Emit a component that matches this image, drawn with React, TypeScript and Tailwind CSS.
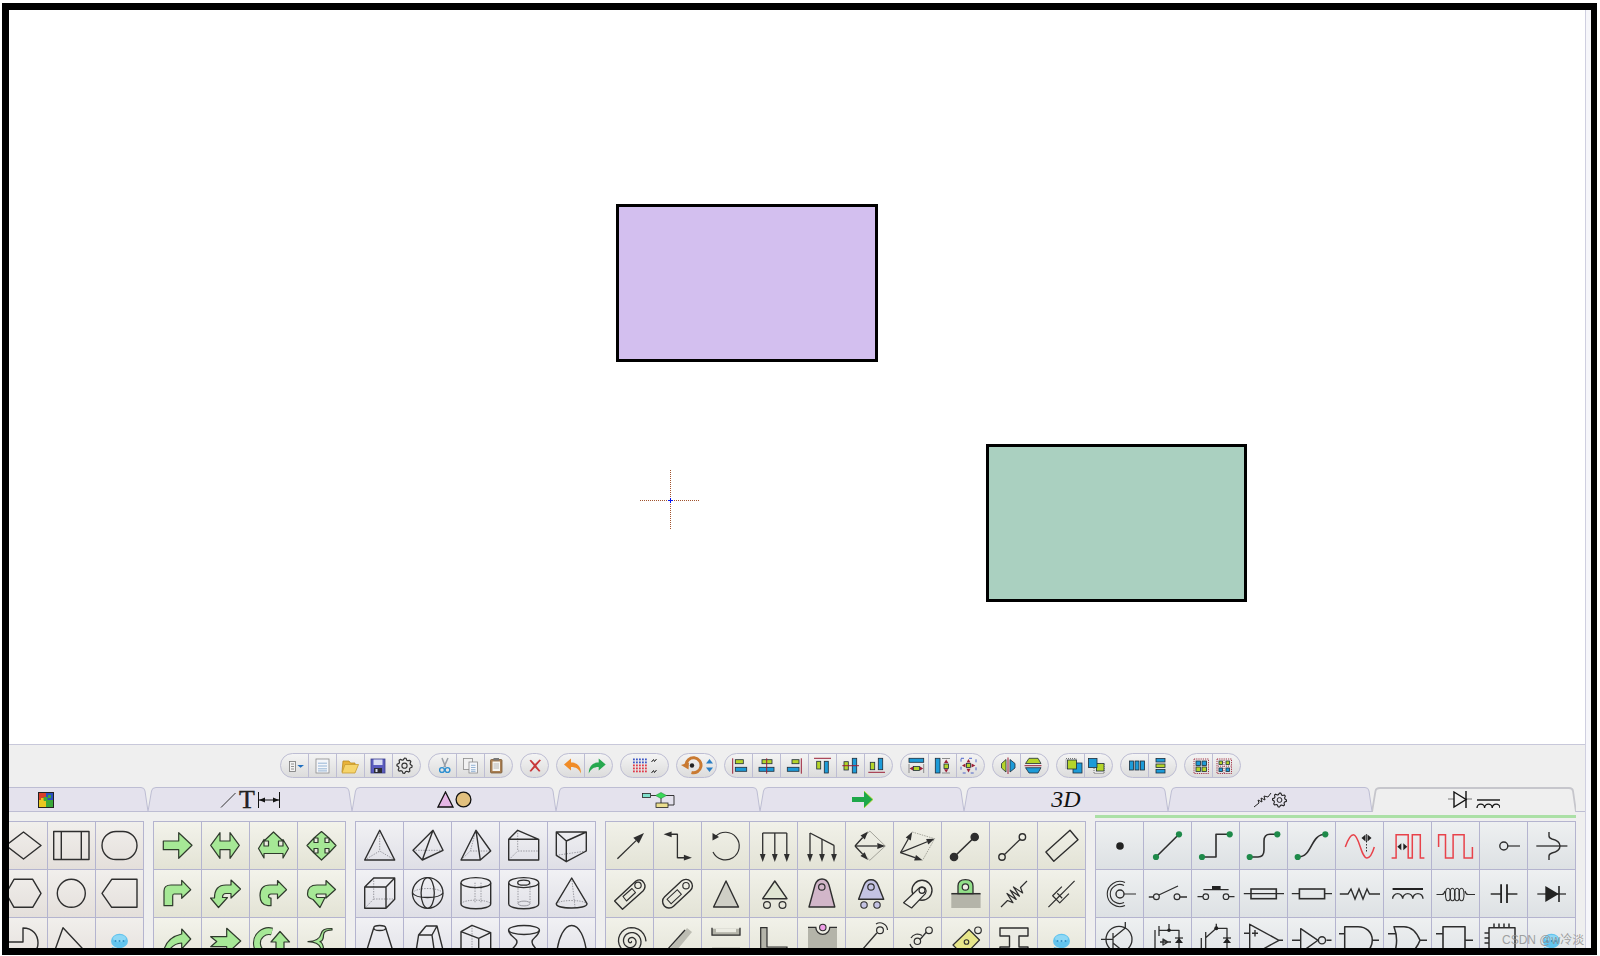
import React, { type ReactNode } from 'react'

const INK = '#2e2e2e'
const ARROW = '#a6e896'

type PathProps = { d: string; f?: string; c?: string; w?: number }

function P({ d, f = 'none', c = INK, w = 1.4 }: PathProps) {
  return <path d={d} fill={f} stroke={c} strokeWidth={w} strokeLinejoin="round" />
}

// hidden edges on the 3d solids
function H({ d }: { d: string }) {
  return <path d={d} fill="none" stroke="#8f8f96" strokeWidth={0.9} strokeDasharray="1.4 1.2" />
}

function C({ x, y, r, f = 'none', c = INK, w = 1.4 }: { x: number; y: number; r: number; f?: string; c?: string; w?: number }) {
  return <circle cx={x} cy={y} r={r} fill={f} stroke={c} strokeWidth={w} />
}

function E({ x, y, rx, ry, f = 'none', c = INK, w = 1.3 }: { x: number; y: number; rx: number; ry: number; f?: string; c?: string; w?: number }) {
  return <ellipse cx={x} cy={y} rx={rx} ry={ry} fill={f} stroke={c} strokeWidth={w} />
}

function R({ x, y, w, h, f }: { x: number; y: number; w: number; h: number; f: string }) {
  return <rect x={x} y={y} width={w} height={h} fill={f} stroke="#1f2d3a" strokeWidth={0.8} />
}

function Arw({ x1, y1, x2, y2, size = 8 }: { x1: number; y1: number; x2: number; y2: number; size?: number }) {
  const a = Math.atan2(y2 - y1, x2 - x1)
  const bx = x2 - Math.cos(a) * size
  const by = y2 - Math.sin(a) * size
  const nx = -Math.sin(a) * size * 0.36
  const ny = Math.cos(a) * size * 0.36
  return (
    <g>
      <line x1={x1} y1={y1} x2={bx} y2={by} stroke={INK} strokeWidth={1.3} />
      <polygon points={`${x2},${y2} ${bx + nx},${by + ny} ${bx - nx},${by - ny}`} fill={INK} />
    </g>
  )
}

function gearPath(cx: number, cy: number, r1: number, r2: number, n: number) {
  const pts: string[] = []
  for (let i = 0; i < n * 4; i++) {
    const a = (i / (n * 4)) * Math.PI * 2
    const r = i % 4 < 2 ? r2 : r1
    pts.push(`${(cx + Math.cos(a) * r).toFixed(2)} ${(cy + Math.sin(a) * r).toFixed(2)}`)
  }
  return `M${pts.join('L')}Z`
}

function spiralPath(cx: number, cy: number, turns: number, rMax: number) {
  const pts: string[] = []
  const n = turns * 24
  for (let i = 0; i <= n; i++) {
    const a = (i / 24) * Math.PI * 2
    const r = (i / n) * rMax
    pts.push(`${(cx + Math.cos(a) * r).toFixed(2)} ${(cy + Math.sin(a) * r).toFixed(2)}`)
  }
  return `M${pts.join('L')}`
}

// diagonal spring, runs lower left to upper right
function springPath() {
  const pts: string[] = ['M11 37', 'L17.5 30.5']
  for (let i = 1; i <= 7; i++) {
    const t = i / 8
    const x = 17.5 + t * 13
    const y = 30.5 - t * 13
    const s = i % 2 ? 3.8 : -3.8
    pts.push(`L${x + s} ${y + s}`)
  }
  pts.push('L30.5 17.5', 'L37 11')
  return pts.join(' ')
}

const Bubble = (
  <g>
    <path d="M16 29 L15 33 L20 30 Z" fill="#5ec1ec" />
    <ellipse cx={23.5} cy={23} rx={8.5} ry={7.2} fill="#62c4ee" />
    <ellipse cx={23.5} cy={20.5} rx={6.5} ry={3.5} fill="#8ed8f5" />
    <circle cx={19.5} cy={23} r={1} fill="#2f8fc4" />
    <circle cx={23.5} cy={23} r={1} fill="#2f8fc4" />
    <circle cx={27.5} cy={23} r={1} fill="#2f8fc4" />
  </g>
)

const basicShapes: ReactNode[] = [
  <P d="M23.5 10 L41 23.5 L23.5 37 L6 23.5 Z" />,
  <P d="M5.7 9.5 H41 V37.5 H5.7 Z M13.3 9.5 V37.5 M33.3 9.5 V37.5" />,
  <rect x={6} y={9.5} width={35} height={28} rx={14} fill="none" stroke={INK} strokeWidth={1.4} />,
  <P d="M14 9.3 H32.7 L41 23.3 L32.7 37.3 H14 L6 23.3 Z" />,
  <C x={23.3} y={23.3} r={14} />,
  <P d="M6 23.3 L15.7 9.3 H41 V37.3 H15.7 Z" />,
  <P d="M23 10 C33 10 38 17 38 25 C38 32 33 38 23 38 H6 V24 H23 Z" />,
  <P d="M15 9.7 L41 37.5 H5 Z" />,
  Bubble,
]

function Green({ d }: { d: string }) {
  return <P d={d} f={ARROW} c="#2f3a2c" w={1.2} />
}

const arrowShapes: ReactNode[] = [
  <Green d="M9.3 19 H24.7 V10.7 L38 23.3 L24.7 36.3 V27.7 H9.3 Z" />,
  <Green d="M8.7 23.3 L18 10.7 V19 H28 V10.7 L37.3 23.3 L28 36.3 V27.7 H18 V36.3 Z" />,
  <Green d="M23.5 10 L33 19 L28.5 19 L28.5 24 L33 24 L33 17.5 L38.5 26.5 L33 36 L33 31.5 L14 31.5 L14 36 L8.5 26.5 L14 17.5 L14 24 L18.5 24 L18.5 19 L14 19 Z" />,
  <Green d="M23.5 9.5 L31 16 H27 V20.5 H31 V16 L38 23.5 L31 31 H31 V26.5 H27 V31 H31 L23.5 38 L16 31 H20 V26.5 H16 V31 L9 23.5 L16 16 V20.5 H20 V16 H16 Z" />,
  <Green d="M10 35.7 V21 Q10 15 17 15 H27.7 V10.3 L36.7 19.7 L27.7 28.3 V24 H20 Q18.7 24 18.7 26 V35.7 Z" />,
  <Green d="M29 15 V10 L38.5 19 L29 28 V23.5 H24 Q20.5 23.5 20.5 27.5 H25.5 L16.5 37.5 L8.5 28 H12.5 Q12.5 15 24 15 Z" />,
  <Green d="M27.5 15 V10.5 L36.5 19.7 L27.5 28.5 V24 H21 Q18.5 24 18.5 26.5 Q18.5 28 21 28 V35.7 H18 Q10 35 10 25.5 Q10 15 20 15 Z" />,
  <Green d="M28 15 V10.5 L37.5 19.5 L28 28 V24 H19.5 Q17 24 19 27.5 H27 L22 37.5 L15 29.5 Q9.5 28 9.5 24 Q9.5 15 19 15 Z" />,
  <Green d="M9 38 Q10 20 27.7 16 V11 L36.7 21 L27.7 31 V25 Q16 26 13 38 Z" />,
  <Green d="M8.7 18.7 H24.7 V10.3 L38.7 23 L24.7 36 V28.7 H8.7 L14.7 23.5 Z" />,
  <g>
    <path d="M22 13.5 A12 12 0 1 0 24 36" fill="none" stroke="#2f3a2c" strokeWidth={8} />
    <path d="M22 13.5 A12 12 0 1 0 24 36" fill="none" stroke={ARROW} strokeWidth={5.8} />
    <Green d="M30 13.5 L39.5 24 H34 V32 H26 V24 H21 Z" />
  </g>,
  <Green d="M34 10.5 C26 10.5 24 12 23 16 C22 21 18 23 10 23.7 C18 24 22 27 23 31 C24 36 26 37 34 37 L34 35.5 C28 35 26 34 25.5 30 C25 27 24.5 24.5 22 23.7 C25 23 25.5 20 25.5 17 C26 13 28 12.5 34 12 Z" />,
]

const solidShapes: ReactNode[] = [
  <g>
    <H d="M8.7 38 L23.7 29 L38.7 38 M23.7 8.3 V29" />
    <P d="M23.7 8.3 L38.7 38 H8.7 Z" />
  </g>,
  <g>
    <H d="M9 28.3 H39" />
    <P d="M29 8.3 L9 28.3 L18.3 38 L39 28.3 Z M29 8.3 L18.3 38" />
  </g>,
  <g>
    <H d="M9 38 L18.3 29 H38.7 M24 8.3 L18.3 29" />
    <P d="M24 8.3 L9 38 H28.3 L38.7 29 Z M24 8.3 L28.3 38" />
  </g>,
  <g>
    <H d="M17.7 8.3 V29 M8.7 38 L17.7 29 H38.7" />
    <P d="M8.7 17.3 L17.7 8.3 L38.7 17.3 V38 H8.7 Z M8.7 17.3 H38.7" />
  </g>,
  <g>
    <H d="M8.3 33.3 L38.3 29" />
    <P d="M8.3 10 H38.3 V29 L18.3 39.7 L8.3 33.3 Z M8.3 10 L18.3 19 L38.3 10 M18.3 19 V39.7" />
  </g>,
  <g>
    <H d="M17.7 8 V29 H38.7 M17.7 29 L8.7 38.3" />
    <P d="M8.7 17 H30 V38.3 H8.7 Z M8.7 17 L17.7 8 H38.7 V29.3 L30 38.3 M30 17 L38.7 8" />
  </g>,
  <g>
    <H d="M8.4 23 C12 17 35 17 39 23" />
    <E x={23.7} y={23} rx={15.3} ry={15.3} />
    <E x={23.7} y={23} rx={6.6} ry={15.3} />
    <path d="M8.4 23 C12 29 35 29 39 23" fill="none" stroke={INK} strokeWidth={1.3} />
  </g>,
  <g>
    <H d="M23 12.7 V33 M29 12.7 V33 M9 33.7 C12 29 35 29 38.7 33.7" />
    <P d="M9 12.7 V33.7 C9 40.5 38.7 40.5 38.7 33.7 V12.7" />
    <E x={23.85} y={12.7} rx={14.85} ry={5} />
  </g>,
  <g>
    <H d="M18 13 V33 M30 13 V33" />
    <E x={24} y={33.5} rx={6} ry={2.4} c="#8f8f96" w={0.9} />
    <P d="M8.7 12.7 V33.7 C8.7 40.5 38.7 40.5 38.7 33.7 V12.7" />
    <E x={23.7} y={12.7} rx={15} ry={5} />
    <E x={23.7} y={12.7} rx={6} ry={2.5} />
  </g>,
  <g>
    <H d="M8.3 33.7 C12 29.5 35 29.5 39 33.7 M23.7 8 L27 37" />
    <P d="M23.7 8 L8.3 33.7 C8.3 39.5 39 39.5 39 33.7 Z" />
  </g>,
  <g>
    <P d="M17.7 10 L9 38 M29.7 10 L38.5 38" />
    <E x={23.7} y={10} rx={6} ry={2.5} />
  </g>,
  <P d="M22 8 H33 L39 32 V40 M22 8 L14.6 17 H28 L33 8 M14.6 17 L11.3 38 M28 17 L31 38" />,
  <g>
    <H d="M20 7.3 V32 M9 32 H26" />
    <P d="M20 7.3 L38.7 14.7 L26.7 20.3 L9 13.7 Z M9 13.7 V40 M26.7 20.3 V40 M38.7 14.7 V38" />
  </g>,
  <g>
    <E x={24} y={12} rx={15.5} ry={4.5} />
    <P d="M8.5 12 C10 20 17 19 17 24 C17 29 10 30 8.5 38 M39.5 12 C38 20 32 19 32 24 C32 29 38 30 39.5 38" />
  </g>,
  <P d="M8.5 38 C10 18 17 7.5 23.7 7.5 C31 7.5 37 18 39 38" />,
]

const BLOCK = '#b4b4a9'

const mechShapes: ReactNode[] = [
  <Arw x1={11.4} y1={36.7} x2={38} y2={11} size={11} />,
  <g>
    <path d="M17 12.3 H23.4 V35.7 H30" fill="none" stroke={INK} strokeWidth={1.3} />
    <Arw x1={23.4} y1={12.3} x2={9.6} y2={12.3} />
    <Arw x1={23.4} y1={35.7} x2={37.9} y2={35.7} />
  </g>,
  <g>
    <path d="M13.5 14.5 A13.8 13.8 0 1 1 11 30" fill="none" stroke={INK} strokeWidth={1.2} />
    <polygon points="10.5,18.5 10.5,11 17,15" fill={INK} />
  </g>,
  <g>
    <path d="M12.7 11 H36.8" fill="none" stroke={INK} strokeWidth={1.3} />
    <Arw x1={12.7} y1={11} x2={12.7} y2={40} />
    <Arw x1={24.8} y1={11} x2={24.8} y2={40} />
    <Arw x1={36.8} y1={11} x2={36.8} y2={40} />
  </g>,
  <g>
    <path d="M12 11 L36 23.3" fill="none" stroke={INK} strokeWidth={1.3} />
    <Arw x1={12} y1={11} x2={12} y2={40} />
    <Arw x1={24} y1={17} x2={24} y2={40} />
    <Arw x1={36} y1={23.3} x2={36} y2={40} />
  </g>,
  <g>
    <path d="M23.8 9 L39.3 24 L23.8 38.3 L9 24 Z" fill="none" stroke="#9b9b92" strokeWidth={0.9} />
    <Arw x1={9} y1={24} x2={22} y2={9.5} />
    <Arw x1={9} y1={24} x2={39.3} y2={24} />
    <Arw x1={9} y1={24} x2={22} y2={38} />
  </g>,
  <g>
    <path d="M18.2 10 L40.6 16.7 L28.6 38.3" fill="none" stroke="#9b9b92" strokeWidth={0.9} strokeDasharray="1.5 1" />
    <Arw x1={6.5} y1={30.7} x2={18.2} y2={10} />
    <Arw x1={6.5} y1={30.7} x2={40.6} y2={16.7} />
    <Arw x1={6.5} y1={30.7} x2={28.6} y2={38.3} />
  </g>,
  <g>
    <path d="M12 35 L32.7 15" stroke={INK} strokeWidth={1.6} fill="none" />
    <C x={12} y={35} r={3.6} f={INK} />
    <C x={32.7} y={15} r={3.6} f={INK} />
  </g>,
  <g>
    <path d="M14 33 L30.5 17" stroke={INK} strokeWidth={1.3} fill="none" />
    <C x={12} y={35} r={3.2} />
    <C x={32.4} y={15} r={3.2} />
  </g>,
  <P d="M7.9 30 L32 8.3 L40 17.7 L15.8 39.3 Z" />,
  <g>
    <P d="M8.6 31 L30 11 Q35 8 38 13 Q40.5 17 37 21 L16.5 39.3 Z" />
    <P d="M17 26.5 L26 18.5 L29.5 22.5 L20.5 31 Z" w={1.1} />
    <C x={32} y={15.3} r={3.2} w={1.2} />
  </g>,
  <g>
    <rect x={5.5} y={17.2} width={36} height={13} rx={6.5} transform="rotate(-43 23.5 23.7)" fill="none" stroke={INK} strokeWidth={1.4} />
    <rect x={12} y={20.7} width={14} height={6} transform="rotate(-43 23.5 23.7)" fill="none" stroke={INK} strokeWidth={1} />
    <C x={32} y={15.7} r={3.2} w={1.2} />
  </g>,
  <P d="M24 11 L36.5 37 H11.6 Z" f="#cfcfc6" />,
  <g>
    <P d="M24.8 11 L37 28.7 H12.7 Z" f="#e0e5d3" />
    <C x={17} y={35} r={3.4} w={1.2} />
    <C x={32.5} y={35} r={3.4} w={1.2} />
  </g>,
  <g>
    <P d="M11 37 L17 15 Q19 9 24 9 Q29 9 31 15 L36.8 37 Z" f="#d2b6c9" />
    <C x={23.8} y={17} r={3.2} w={1.2} />
  </g>,
  <g>
    <P d="M12.6 29.3 L18 15 Q20 9.7 25 9.7 Q30 9.7 32 15 L37.7 29.3 Z" f="#c4c3e3" />
    <C x={25} y={17} r={3.2} w={1.2} />
    <C x={18} y={35} r={3.2} f="#c4c3e3" w={1.1} />
    <C x={31} y={35} r={3.2} f="#c4c3e3" w={1.1} />
  </g>,
  <g>
    <C x={28} y={20.3} r={10} />
    <P d="M9.6 32.7 L24.4 18.7 Q28 15 31.4 18.5 Q33 21 31.4 23.7 L17.6 38 Z" f="#f0f0e8" w={1.2} />
    <C x={28} y={20.3} r={3} w={1.2} />
  </g>,
  <g>
    <rect x={9.3} y={24} width={29.3} height={14} fill={BLOCK} />
    <path d="M16 23.7 V16 Q16 9.7 23.4 9.7 Q31 9.7 31 16 V23.7 Z" fill="#92e08a" stroke={INK} strokeWidth={1.3} />
    <C x={23.4} y={17} r={3.2} f="#eeeee5" w={1.2} />
    <path d="M9.3 23.7 H38.6" stroke={INK} strokeWidth={1.5} />
  </g>,
  <P d={springPath()} w={1.2} />,
  <g transform="rotate(-45 23.5 24)">
    <P d="M5 24 H21 M28 24 H42 M29 19 H16 V29 H29 M21 20.5 V27.5 M21 24 H28" w={1.2} />
  </g>,
  <P d={spiralPath(25, 23.3, 3, 15)} w={1.3} />,
  <g>
    <polygon points="13,34 33,10 38,14 18,38" fill="#bdbdb3" />
    <path d="M13 32 L31 12" stroke={INK} strokeWidth={1.3} />
  </g>,
  <g>
    <rect x={10} y={10.7} width={28} height={6.5} fill={BLOCK} />
    <path d="M10 9.7 V17.2 H38 V9.7" stroke={INK} strokeWidth={1.3} fill="none" />
    <rect x={14} y={10.7} width={20} height={3.5} fill="#ecece3" />
    <rect x={10} y={29.5} width={28} height={6} fill={BLOCK} />
  </g>,
  <path d="M10.7 9.7 H17 V29 H37 V36 H10.7 Z" fill={BLOCK} stroke={INK} strokeWidth={1.2} />,
  <g>
    <path d="M10 9.3 H17.8 A7 7 0 0 0 31.8 9.3 H39 V40 H10 Z" fill={BLOCK} />
    <path d="M10 9.3 H17.8 A7 7 0 0 0 31.8 9.3 H39" fill="none" stroke={INK} strokeWidth={1.3} />
    <C x={24.8} y={9.5} r={3.2} f="#ee9ee6" w={1.1} />
  </g>,
  <g>
    <path d="M16 32 L30.8 15" stroke={INK} strokeWidth={1.3} />
    <C x={34} y={12.3} r={3.4} w={1.2} />
    <path d="M30 6 A7.5 7.5 0 0 1 41.5 12" fill="none" stroke={INK} strokeWidth={1.2} />
  </g>,
  <g>
    <path d="M26 21.5 L32.5 14" stroke={INK} strokeWidth={1.3} />
    <C x={23.4} y={23.3} r={3.2} w={1.2} />
    <path d="M17 20 A7.5 7.5 0 0 1 28 17.5 M16 26 C17 30 22 33 26 31" fill="none" stroke={INK} strokeWidth={1.2} />
    <C x={35} y={12.3} r={3.3} w={1.2} />
  </g>,
  <g>
    <P d="M11 27 L27 11.5 L37.5 22 L22 38 Z" f="#e7e68a" w={1.2} />
    <C x={24.5} y={24} r={2.3} w={1.1} />
    <C x={36} y={12.3} r={3.3} f="#ecece3" w={1.2} />
  </g>,
  <P d="M10 10 H38 V18 H29 V29 H38 V38 H10 V29 H19.5 V18 H10 Z" f="#ebebe3" />,
  Bubble,
]

const DOT = '#1e8a4a'
const RED = '#e8424a'

function DotLine({ d, pts }: { d: string; pts: [number, number][] }) {
  return (
    <g>
      <P d={d} w={1.6} />
      {pts.map((p) => (
        <circle key={p.join()} cx={p[0]} cy={p[1]} r={3.1} fill={DOT} />
      ))}
    </g>
  )
}

const tipPts = (x: number, y: number) => `${x - 1},${y - 3.5} ${x - 1},${y + 3.5} ${x - 5},${y}`
const tipPtsR = (x: number, y: number) => `${x + 1},${y - 3.5} ${x + 1},${y + 3.5} ${x + 5},${y}`

const circuitShapes: ReactNode[] = [
  <circle cx={24} cy={24} r={3.8} fill="#222" />,
  <DotLine d="M12 35 L35 12.3" pts={[[12, 35], [35, 12.3]]} />,
  <DotLine d="M10 35 H24 V12.3 H37.7" pts={[[10, 35], [37.7, 12.3]]} />,
  <DotLine d="M9.7 35 H18 Q24 35 24 28 V19 Q24 12.3 30 12.3 H37.3" pts={[[9.7, 35], [37.3, 12.3]]} />,
  <DotLine d="M9.7 35 C25 35 22 12.3 37.3 12.3" pts={[[9.7, 35], [37.3, 12.3]]} />,
  <g>
    <path d="M9.3 25 C12 17 15 12.7 17.5 12.7 C23 12.7 25 36 31 36 C34 36 36.5 31 38.3 25" fill="none" stroke={RED} strokeWidth={1.5} />
    <path d="M30.5 19 V30" stroke="#333" strokeWidth={1} strokeDasharray="1.5 1.5" />
    <polygon points={tipPts(30.5, 16)} fill="#222" />
    <polygon points={tipPtsR(30.5, 16)} fill="#222" />
    <path d="M30.5 12 V20" stroke="#222" strokeWidth={0.8} />
  </g>,
  <g>
    <path d="M7.6 36 H12.1 V12.7 H24.2 V36 H28.3 V12.7 H36.3 V36 H40.4" fill="none" stroke={RED} strokeWidth={1.5} />
    <polygon points={tipPts(18.3, 24.7)} fill="#222" />
    <polygon points={tipPtsR(18.3, 24.7)} fill="#222" />
  </g>,
  <path d="M6.6 25 V12.7 H13.5 V36 H21.1 V12.7 H32.1 V36 H40.4 V25" fill="none" stroke={RED} strokeWidth={1.5} />,
  <g>
    <C x={23.8} y={24} r={4} />
    <path d="M27.8 24 H40" stroke={INK} strokeWidth={1.2} />
  </g>,
  <g>
    <path d="M8.3 24 H39.4" stroke={INK} strokeWidth={1.3} />
    <P d="M21 10 V14 Q21 16 24 17 Q32 19 32 24 Q32 29 24 31 Q21 32 21 34 V38" />
  </g>,
  <g>
    <C x={24} y={24} r={4} />
    <path d="M28 24 H40 M29 12.5 A12.6 12.6 0 1 0 29 35.5 M28 15.5 A9.5 9.5 0 1 0 28 32.5" fill="none" stroke={INK} strokeWidth={1.1} />
  </g>,
  <g>
    <path d="M4.8 27 H9.6 M35.9 27 H43 M14.8 25 L34 16" fill="none" stroke={INK} strokeWidth={1.3} />
    <C x={12.4} y={26.7} r={2.9} w={1.2} />
    <C x={33} y={26.7} r={2.9} w={1.2} />
  </g>,
  <g>
    <path d="M5.5 26.7 H11 M36.8 26.7 H42.5 M11.4 19.7 H36.6" stroke={INK} strokeWidth={1.3} fill="none" />
    <rect x={20} y={16} width={8.6} height={3.7} fill="#222" />
    <C x={13.8} y={26.7} r={2.8} w={1.2} />
    <C x={34} y={26.7} r={2.8} w={1.2} />
  </g>,
  <g>
    <path d="M3.8 23.7 H44" stroke={INK} strokeWidth={1.2} />
    <rect x={11} y={19} width={25.3} height={9.7} fill="none" stroke={INK} strokeWidth={1.6} />
  </g>,
  <g>
    <path d="M3.8 23.7 H11.4 M36.6 23.7 H44" stroke={INK} strokeWidth={1.2} />
    <rect x={11.4} y={19} width={25.2} height={9.7} fill="none" stroke={INK} strokeWidth={1.6} />
  </g>,
  <path d="M3.8 24 H12 L15 19 L19 29 L23 19 L27 29 L31 19 L33.5 24 H44" fill="none" stroke={INK} strokeWidth={1.4} />,
  <g>
    <path d="M8.6 19 H39" stroke="#222" strokeWidth={2} />
    <path d="M8.6 28.7 A5 5 0 0 1 18.7 28.7 A5 5 0 0 1 28.8 28.7 A5 5 0 0 1 39 28.7" fill="none" stroke={INK} strokeWidth={1.4} />
  </g>,
  <g>
    <path d="M4.5 24.5 H10 Q12 24.5 13 21 M33 21 Q34 24.5 36 24.5 H43" fill="none" stroke={INK} strokeWidth={1.1} />
    <E x={16} y={24.5} rx={2.5} ry={6.3} w={1.1} />
    <E x={20.5} y={24.5} rx={2.5} ry={6.3} w={1.1} />
    <E x={25} y={24.5} rx={2.5} ry={6.3} w={1.1} />
    <E x={29.5} y={24.5} rx={2.5} ry={6.3} w={1.1} />
  </g>,
  <g>
    <path d="M10.7 24 H21 M27 24 H37.4" stroke={INK} strokeWidth={1.3} />
    <path d="M21.1 14.3 V33 M27 14.3 V33" stroke="#222" strokeWidth={1.8} />
  </g>,
  <g>
    <path d="M9.3 24 H38" stroke={INK} strokeWidth={1.3} />
    <polygon points="17.3,16 30.8,24 17.3,32" fill="#222" />
    <path d="M31 16 V32" stroke="#222" strokeWidth={1.6} />
  </g>,
  <g>
    <C x={23} y={21.3} r={13} w={1.3} />
    <P d="M5 21.3 H17 M17 15 V32 M17 20 L29.3 10 V4 M17 25 L29.3 35 V42" w={1.3} />
  </g>,
  <g>
    <P d="M11 12 V30 M15 8 V18 M15 12.3 H35 V38 M25 12.3 V6 M16 24 H27 M19 21 V27 L24 24 Z" w={1.3} />
    <circle cx={25} cy={12.3} r={1.8} fill="#222" />
    <polygon points="31,25 39,25 35,20" fill="#222" />
    <path d="M31 20 H39" stroke="#222" strokeWidth={1.2} />
  </g>,
  <g>
    <P d="M9.3 20 V38 M13.7 14 V34 M13.7 19.7 L24.3 10.3 H35 V38 M24.3 10.3 V5.7" w={1.3} />
    <circle cx={24.3} cy={10.3} r={2} fill="#222" />
    <polygon points="31,25 39,25 35,20" fill="#222" />
    <path d="M31 20 H39" stroke="#222" strokeWidth={1.2} />
  </g>,
  <g>
    <P d="M9.7 6.3 L39 22.3 L9.7 38.5 Z M4 15.3 H9.7 M39 22.3 H43 M9.7 38.5 H4 M12 15.3 H18 M15 12 V18.5" w={1.4} />
  </g>,
  <g>
    <P d="M12.7 10.7 L30 22.3 L12.7 34.5 Z M4 22.3 H12.7 M38.5 22.3 H43.5" w={1.4} />
    <C x={34} y={22.3} r={3.6} w={1.4} />
  </g>,
  <P d="M8.7 8.7 H22 C30 8.7 36.3 14 36.3 22.3 C36.3 31 30 36 22 36 H8.7 Z M3 15.7 H8.7 M36.3 22.3 H43" w={1.5} />,
  <P d="M10 8.7 H20 C28 8.7 33 15 36 22.3 C33 30 28 36 20 36 H10 C13.5 27 13.5 18 10 8.7 Z M4 15.7 H12 M36 22.3 H43" w={1.5} />,
  <P d="M11 8.7 H33 V40 H11 Z M4 15.7 H11 M33 22.3 H41" w={1.6} />,
  <P d="M9 9.7 H35 V40 H9 Z M14 5.5 V9.7 M19 5.5 V9.7 M24 5.5 V9.7 M29 5.5 V9.7 M4.5 15 H9 M4.5 20 H9 M4.5 25 H9" w={1.5} />,
  Bubble,
]

function Doc({ x, y, w, h }: { x: number; y: number; w: number; h: number }) {
  return (
    <g>
      <rect x={x} y={y} width={w} height={h} fill="#f4f6fa" stroke="#8c8c8c" strokeWidth={0.8} />
      {[0.3, 0.5, 0.7, 0.85].map((t) => (
        <path key={t} d={`M${x + 2} ${y + h * t} H${x + w - 2}`} stroke="#7fa5cc" strokeWidth={0.8} />
      ))}
    </g>
  )
}

function RedFrame({ d }: { d: string }) {
  return <path d={d} stroke="#9c1f36" strokeWidth={1} fill="none" />
}

const G = '#b5d52a'
const B = '#1d9bd8'
const M = '#9c1f36'

type ToolIcon = { w?: number; el: ReactNode }

const toolGroups: ToolIcon[][] = [
  [
    {
      el: (
        <g>
          <rect x={8.5} y={7.5} width={6} height={10} fill="#f3f3f3" stroke="#777" strokeWidth={0.8} />
          <path d="M10 10 H13 M10 12.5 H13 M10 15 H13" stroke="#777" strokeWidth={0.8} />
          <polygon points="16.3,11 23,11 19.6,13.8" fill="#1f6fc0" />
        </g>
      ),
    },
    { el: <Doc x={7} y={5} w={13} h={14} /> },
    {
      el: (
        <g>
          <path d="M5 18 L6 7 H12 L13.5 9 H18 V11" fill="#e9b33a" stroke="#b88a22" strokeWidth={0.8} />
          <path d="M5 19 L8 10.5 H21.5 L18 19 Z" fill="#f6d56c" stroke="#c89a2e" strokeWidth={0.8} />
        </g>
      ),
    },
    {
      el: (
        <g>
          <rect x={6} y={5} width={14} height={14} fill="#5a5cbe" stroke="#3d3f8c" strokeWidth={0.8} />
          <rect x={8.5} y={5.5} width={9} height={5.5} fill="#d9ddf2" />
          <rect x={9} y={14} width={8} height={5} fill="#2d2d33" />
          <rect x={10.5} y={15} width={2} height={3} fill="#d9ddf2" />
        </g>
      ),
    },
    {
      w: 26,
      el: (
        <g>
          <path d={gearPath(11.5, 11.7, 6, 7.6, 8)} fill="none" stroke="#333" strokeWidth={1.2} strokeLinejoin="round" />
          <circle cx={11.5} cy={11.7} r={2.6} fill="none" stroke="#333" strokeWidth={1.1} />
        </g>
      ),
    },
  ],
  [
    {
      el: (
        <g>
          <path d="M13 4 L16.5 13 M19 4 L15 13" stroke="#9aa0a8" strokeWidth={1.5} />
          <circle cx={13} cy={16} r={2.4} fill="none" stroke="#2d8fd0" strokeWidth={1.4} />
          <circle cx={18.5} cy={16} r={2.4} fill="none" stroke="#2d8fd0" strokeWidth={1.4} />
        </g>
      ),
    },
    {
      el: (
        <g>
          <rect x={6.5} y={4.5} width={9} height={11} fill="#f1f1f1" stroke="#8c8c8c" strokeWidth={0.8} />
          <Doc x={12} y={8} w={8.5} h={11} />
        </g>
      ),
    },
    {
      w: 26,
      el: (
        <g>
          <rect x={5.5} y={5.5} width={11.5} height={13.5} rx={1} fill="#a97f52" stroke="#7b5b36" strokeWidth={0.8} />
          <rect x={7.5} y={7.5} width={7.5} height={9.5} fill="#f6f6f2" />
          <path d="M8.5 10 H14 M8.5 12 H14 M8.5 14 H14" stroke="#8d8d8d" strokeWidth={0.6} />
          <rect x={8.5} y={4} width={5.5} height={2.5} fill="#777" />
        </g>
      ),
    },
  ],
  [
    {
      w: 27,
      el: <path d="M8.5 6.5 L10 5.8 L14 10 L18.5 5.5 L20 6.2 L15.3 11.8 L19.5 17 L18 17.8 L14 13.5 L10 17.8 L8.5 17 L12.8 11.8 Z" fill="#c8383a" />,
    },
  ],
  [
    {
      el: (
        <g>
          <path d="M7 10.5 L14 4.5 V8.5 C20 8.5 24 12 24 19.5 C22 15 19 13 14 13 V16.5 Z" fill="#f08c28" />
        </g>
      ),
    },
    {
      w: 26,
      el: (
        <g>
          <path d="M20.7 10.5 L13.7 4.5 V8.5 C7.7 8.5 4 12 3.7 19.5 C6 15 8.7 13 13.7 13 V16.5 Z" fill="#27a84f" />
        </g>
      ),
    },
  ],
  [
    {
      w: 47,
      el: (
        <g>
          {[0, 1, 2, 3, 4].map((row) =>
            [0, 1, 2, 3, 4].map((col) => (
              <rect key={`${row}-${col}`} x={12 + col * 3} y={4.5 + row * 3} width={1.8} height={1.8} fill={row < 2 ? '#3f57c6' : '#e03a4a'} />
            )),
          )}
          <path d="M30.5 8 L32.5 5.5 L33.5 7.5 L35.5 5 M30.5 19 L32.5 16.5 L33.5 18.5 L35.5 16" fill="none" stroke="#222" strokeWidth={1} />
        </g>
      ),
    },
  ],
  [
    {
      w: 39,
      el: (
        <g>
          <path d="M9 11 A7.5 7.5 0 1 1 14.5 18.5" fill="none" stroke="#c97a32" strokeWidth={3} />
          <polygon points="4,11 12,8.5 11.5,15.5" fill="#c97a32" />
          <circle cx={15} cy={11.5} r={2.2} fill="#222" />
          <polygon points="29,9.5 36,9.5 32.5,5" fill="#2b7fc4" />
          <polygon points="29,13.5 36,13.5 32.5,18" fill="#2b7fc4" />
        </g>
      ),
    },
  ],
  [
    { el: <g><RedFrame d="M7.7 4.3 V19.7" /><R x={10.3} y={5.7} w={8} h={4} f={G} /><R x={10.3} y={13.3} w={11.4} h={4} f={B} /></g> },
    { el: <g><R x={9} y={5.7} w={10} h={4} f={G} /><R x={6} y={13.3} w={15} h={4} f={B} /><RedFrame d="M13.7 4.3 V19.7" /></g> },
    { el: <g><RedFrame d="M20.3 4.3 V19.7" /><R x={11} y={5.7} w={7} h={4} f={G} /><R x={6.3} y={13.3} w={11.7} h={4} f={B} /></g> },
    { el: <g><RedFrame d="M5 4.3 H22" /><R x={7.7} y={7.3} w={4} h={7.7} f={G} /><R x={15.3} y={7.3} w={4} h={11.7} f={B} /></g> },
    { el: <g><R x={7} y={7.7} w={4.3} h={8.3} f={G} /><R x={15.3} y={4.3} w={4.4} h={14.7} f={B} /><RedFrame d="M5.3 11.7 H22" /></g> },
    { w: 26, el: <g><RedFrame d="M3.3 18.3 H20" /><R x={5.3} y={8.3} w={4.4} h={7.4} f={G} /><R x={13.3} y={4.3} w={4.4} h={11.4} f={B} /></g> },
  ],
  [
    {
      el: (
        <g>
          <R x={8} y={4.3} w={14.7} h={4} f={B} />
          <path d="M8 10 V19 M22.7 10 V19" stroke="#8b8b8b" strokeWidth={1} />
          <R x={12.5} y={12.5} w={6} h={4} f={G} />
          <polygon points="8.5,14.5 12,12.5 12,16.5" fill={M} />
          <polygon points="22.2,14.5 19,12.5 19,16.5" fill={M} />
        </g>
      ),
    },
    {
      el: (
        <g>
          <R x={6.3} y={4.3} w={4.7} h={14.7} f={B} />
          <path d="M13 4.5 H21 M13 19 H21" stroke="#8b8b8b" strokeWidth={1} />
          <R x={15} y={10} w={4.5} h={4.5} f={G} />
          <polygon points="17.2,5.5 15,9 19.4,9" fill={M} />
          <polygon points="17.2,18.5 15,15.2 19.4,15.2" fill={M} />
        </g>
      ),
    },
    {
      w: 26,
      el: (
        <g>
          <rect x={4} y={4.3} width={15} height={14.7} fill="none" stroke="#3f57c6" strokeWidth={0.9} strokeDasharray="3 5" />
          <R x={9.5} y={9.5} w={4} h={4} f={G} />
          <polygon points="11.5,5 9.5,8.5 13.5,8.5" fill={M} />
          <polygon points="11.5,18.5 9.5,14.8 13.5,14.8" fill={M} />
          <polygon points="5,11.5 8.5,9.5 8.5,13.5" fill={M} />
          <polygon points="18.3,11.5 14.5,9.5 14.5,13.5" fill={M} />
        </g>
      ),
    },
  ],
  [
    {
      el: (
        <g>
          <path d="M13 5.5 V18 L8.5 14 V9.5 Z" fill={G} stroke="#1f2d3a" strokeWidth={0.8} />
          <path d="M17 5.5 V18 L22 14 V9.5 Z" fill={B} stroke="#1f2d3a" strokeWidth={0.8} />
          <path d="M15 3.5 V20" stroke={M} strokeWidth={1} />
        </g>
      ),
    },
    {
      w: 26,
      el: (
        <g>
          <path d="M4.5 9.5 L8 4.3 H17 L20 9.5 Z" fill={G} stroke="#1f2d3a" strokeWidth={0.8} />
          <path d="M4.5 13.7 L8 19 H17 L20 13.7 Z" fill={B} stroke="#1f2d3a" strokeWidth={0.8} />
          <path d="M3.5 11.7 H20.5" stroke={M} strokeWidth={1} />
        </g>
      ),
    },
  ],
  [
    {
      el: (
        <g>
          <rect x={16} y={9} width={9} height={10} fill={B} stroke="#1f2d3a" strokeWidth={0.8} />
          <rect x={9} y={4.5} width={10} height={10} fill="none" stroke="#555" strokeWidth={0.8} strokeDasharray="1 1" />
          <R x={10.5} y={6} w={9} h={9} f={G} />
        </g>
      ),
    },
    {
      w: 26,
      el: (
        <g>
          <rect x={9} y={10} width={10} height={9.5} fill="none" stroke="#555" strokeWidth={0.8} strokeDasharray="1 1" />
          <R x={11.5} y={9.5} w={7.5} h={7.5} f={G} />
          <R x={3.5} y={4.5} w={8.5} h={9} f={B} />
        </g>
      ),
    },
  ],
  [
    {
      el: (
        <g>
          <R x={8.5} y={7} w={4} h={9} f={B} />
          <R x={14} y={7} w={4} h={9} f={B} />
          <R x={19.5} y={7} w={4} h={9} f={B} />
        </g>
      ),
    },
    {
      w: 26,
      el: (
        <g>
          <R x={7} y={4.5} w={9} h={3.5} f={B} />
          <R x={7} y={10} w={9} h={3.5} f={G} />
          <R x={7} y={15.5} w={9} h={3.5} f={B} />
        </g>
      ),
    },
  ],
  [
    {
      el: (
        <g>
          <rect x={9} y={5} width={14.5} height={14.5} fill="none" stroke={M} strokeWidth={0.9} strokeDasharray="1.2 1" />
          <R x={11} y={7} w={4.5} h={4.5} f={B} />
          <R x={17} y={7} w={4.5} h={4.5} f={B} />
          <R x={11} y={13} w={4.5} h={4.5} f={G} />
          <R x={17} y={13} w={4.5} h={4.5} f={G} />
        </g>
      ),
    },
    {
      w: 26,
      el: (
        <g>
          <rect x={4} y={5} width={14.5} height={14.5} fill="none" stroke={M} strokeWidth={0.9} strokeDasharray="1.2 1" />
          <R x={6} y={7} w={3.5} h={3.5} f={G} />
          <R x={13} y={7} w={3.5} h={3.5} f={G} />
          <R x={6} y={14} w={3.5} h={3.5} f={B} />
          <R x={13} y={14} w={3.5} h={3.5} f={B} />
          <path d="M11 6 V19 M5 12.2 H17.5" stroke={M} strokeWidth={0.8} strokeDasharray="1 1" />
        </g>
      ),
    },
  ],
]

function ToolGroup({ icons }: { icons: ToolIcon[] }) {
  return (
    <div className="flex h-[25px] shrink-0 overflow-hidden rounded-full border border-[#bdbdd3] bg-linear-to-b from-[#f4f4f4] to-[#dcdcdc]">
      {icons.map((icon, i) => (
        <div key={i} className="flex border-r border-[#bdbdd3] last:border-r-0">
          <svg width={icon.w === 26 ? 27 : icon.w ?? 27} height={23} viewBox={`0 0 ${icon.w === 26 ? 27 : icon.w ?? 27} 23`}>
            {icon.el}
          </svg>
        </div>
      ))}
    </div>
  )
}

function Tab({ active, children }: { active?: boolean; children: ReactNode }) {
  return (
    <div className="relative flex h-[25px] w-[204px] shrink-0 items-center justify-center">
      <svg className="absolute inset-0" width={204} height={25} viewBox="0 0 204 25">
        {active ? (
          <path d="M0 25 L3.5 4 Q4 1 8 1 H197 Q200.5 1 201 4 L204 25" fill="#efefef" stroke="#c6c6cc" strokeWidth={1.8} />
        ) : (
          <path d="M0 24.5 L3.5 4 Q4 .5 8 .5 H197 Q200.5 .5 201 4 L204 24.5 Z" fill="#e4e2ed" stroke="#bdbdd3" strokeWidth={1} />
        )}
      </svg>
      <div className="relative flex items-center">{children}</div>
    </div>
  )
}

function IconGrid({ cols, cell, items }: { cols: string; cell: string; items: ReactNode[] }) {
  return (
    <div className={`grid shrink-0 auto-rows-[48px] border-l border-t border-[#b4b4cf] ${cols}`}>
      {items.map((item, i) => (
        <div key={i} className={`border-b border-r border-[#b4b4cf] bg-linear-to-b ${cell}`}>
          <svg width={47} height={47} viewBox="0 0 47 47" className="block">
            {item}
          </svg>
        </div>
      ))}
    </div>
  )
}

export default function App() {
  return (
    <div className="h-[956px] w-[1600px] bg-white pb-[1px] pl-[2px] pr-[3px] pt-[3px] font-['Liberation_Sans','Noto_Sans_CJK_SC',sans-serif]">
      <div className="flex h-full overflow-hidden border-y-[7px] border-l-[7px] border-r-[6px] border-black">
        <div className="flex min-w-0 flex-1 flex-col border-r border-[#cfcfe0]">
          <div className="relative flex-1 bg-white">
            <div className="absolute left-[607px] top-[194px] h-[158px] w-[262px] border-[3px] border-black bg-[#d3bfef]" />
            <div className="absolute left-[977px] top-[434px] h-[158px] w-[261px] border-[3px] border-black bg-[#aad0c0]" />
            <svg className="absolute left-[631px] top-[460px]" width={60} height={60} viewBox="0 0 60 60">
              <path d="M0 30.5 H60 M30.5 0 V59" stroke="#a0522d" strokeWidth={1} strokeDasharray="1 1" fill="none" />
              <path d="M28 30.5 H33 M30.5 28 V33" stroke="#0a18f0" strokeWidth={1} fill="none" />
            </svg>
          </div>

          <div className="relative h-[204px] shrink-0 overflow-hidden border-t border-[#c8c8da] bg-[#efefef]">
            <div className="flex gap-[7px] pl-[271px] pt-[8px]">
              {toolGroups.map((icons, i) => (
                <ToolGroup key={i} icons={icons} />
              ))}
            </div>

            <div className="-ml-[65px] mt-[9px] flex">
              <Tab>
                <svg width={16} height={16} viewBox="0 0 16 16">
                  <rect width={16} height={16} fill="#222" />
                  <rect x={1} y={1} width={7} height={7} fill="#d8402a" />
                  <rect x={8} y={1} width={7} height={7} fill="#2a4fc0" />
                  <rect x={1} y={8} width={7} height={7} fill="#e8c820" />
                  <rect x={8} y={8} width={7} height={7} fill="#3aa83a" />
                  <rect x={5.5} y={5} width={4} height={4} fill="#3aa83a" />
                  <rect x={3} y={6} width={2.5} height={3.5} fill="#e8c820" />
                  <rect x={10} y={3} width={3} height={3} fill="#3aa83a" />
                </svg>
              </Tab>
              <Tab>
                <svg width={16} height={16} viewBox="0 0 16 16">
                  <path d="M1 15.5 L15.5 1" stroke="#333" strokeWidth={1} />
                </svg>
                <span className="mx-[3px] font-['Liberation_Serif',serif] text-[26px] leading-[25px] text-[#222] [-webkit-text-stroke:0.4px_#222]">T</span>
                <svg width={22} height={16} viewBox="0 0 22 16">
                  <path d="M.5 0 V16 M21.5 0 V16 M1 8 H21" stroke="#111" strokeWidth={1} />
                  <polygon points="1,8 7,5.5 7,10.5" fill="#111" />
                  <polygon points="21,8 15,5.5 15,10.5" fill="#111" />
                </svg>
              </Tab>
              <Tab>
                <svg width={35} height={17} viewBox="0 0 35 17">
                  <path d="M8.5 1 L16 16 H1 Z" fill="#e6b6e6" stroke="#111" strokeWidth={1.3} />
                  <circle cx={26.5} cy={8.5} r={7.4} fill="#e2c07e" stroke="#111" strokeWidth={1.3} />
                </svg>
              </Tab>
              <Tab>
                <svg width={33} height={16} viewBox="0 0 33 16">
                  <rect x={.5} y={1.5} width={8} height={4} fill="#7fe0cc" stroke="#222" strokeWidth={0.8} />
                  <path d="M9 3.5 H14 M24 3.5 H32 V13 H26 M19 6 V11" stroke="#222" strokeWidth={0.9} fill="none" />
                  <polygon points="19,0.5 24.5,3.5 19,6.5 13.5,3.5" fill="#38d858" stroke="#1a7a30" strokeWidth={0.5} />
                  <rect x={14} y={11} width={12} height={4.5} fill="#ecdf90" stroke="#222" strokeWidth={0.8} />
                </svg>
              </Tab>
              <Tab>
                <svg width={21} height={17} viewBox="0 0 21 17">
                  <path d="M0 6 H12 V0 L21 8.5 L12 17 V11 H0 Z" fill="#1ea84a" />
                  <path d="M12 0 L21 8.5 L12 17" fill="none" stroke="#b4e020" strokeWidth={0.8} />
                </svg>
              </Tab>
              <Tab>
                <span className="font-['Liberation_Serif',serif] text-[24px] italic leading-[25px] text-[#111]">3D</span>
              </Tab>
              <Tab>
                <svg width={33} height={16} viewBox="0 0 33 16">
                  <path d="M0 15 L5 11 L4 8 L8 10 L7 6 L11 8 L10 4 L14 5 L17 1" fill="none" stroke="#222" strokeWidth={1} />
                  <path d={gearPath(25.5, 8, 5.5, 7, 8)} fill="none" stroke="#222" strokeWidth={1.1} strokeLinejoin="round" />
                  <circle cx={25.5} cy={8} r={2.4} fill="none" stroke="#222" strokeWidth={1} />
                </svg>
              </Tab>
              <Tab active>
                <svg width={52} height={18} viewBox="0 0 52 18">
                  <path d="M0 8 H24" stroke="#777" strokeWidth={1} />
                  <path d="M6 1 L18 8.5 L6 16 Z" fill="#efefef" stroke="#111" strokeWidth={1.4} />
                  <path d="M18 0 V17" stroke="#111" strokeWidth={1.4} />
                  <path d="M29 9 H52" stroke="#111" strokeWidth={1.4} />
                  <path d="M29 17 A3.8 3.8 0 0 1 36.6 17 A3.8 3.8 0 0 1 44.2 17 A3.8 3.8 0 0 1 52 17" fill="none" stroke="#111" strokeWidth={1.3} />
                </svg>
              </Tab>
              <div className="h-[25px] w-[12px] shrink-0 border-b border-[#bdbdd3]" />
            </div>

            <div className="-ml-[10px] mt-[9px] flex gap-[9px]">
              <IconGrid cols="grid-cols-[repeat(3,48px)]" cell="from-[#f1efec] to-[#e4dfdb]" items={basicShapes} />
              <IconGrid cols="grid-cols-[repeat(4,48px)]" cell="from-[#f3f3eb] to-[#e3e3d5]" items={arrowShapes} />
              <IconGrid cols="grid-cols-[repeat(5,48px)]" cell="from-[#f1f1f4] to-[#dfdfe6]" items={solidShapes} />
              <IconGrid cols="grid-cols-[repeat(10,48px)]" cell="from-[#f1f1e9] to-[#e3e3d6]" items={mechShapes} />
              <div className="shrink-0">
                <div className="-mt-[6px] mb-[3px] h-[3px] bg-[#abe0a6]" />
                <IconGrid cols="grid-cols-[repeat(10,48px)]" cell="from-[#eef0f1] to-[#dde1e4]" items={circuitShapes} />
              </div>
            </div>

            <span className="absolute left-[1493px] top-[188px] whitespace-nowrap text-[12px] leading-[14px] text-[#8a8a8a]/80">
              CSDN @w冷淡
            </span>
          </div>
        </div>
        <div className="w-[5px] shrink-0 bg-[#f6f6fa]" />
      </div>
    </div>
  )
}
